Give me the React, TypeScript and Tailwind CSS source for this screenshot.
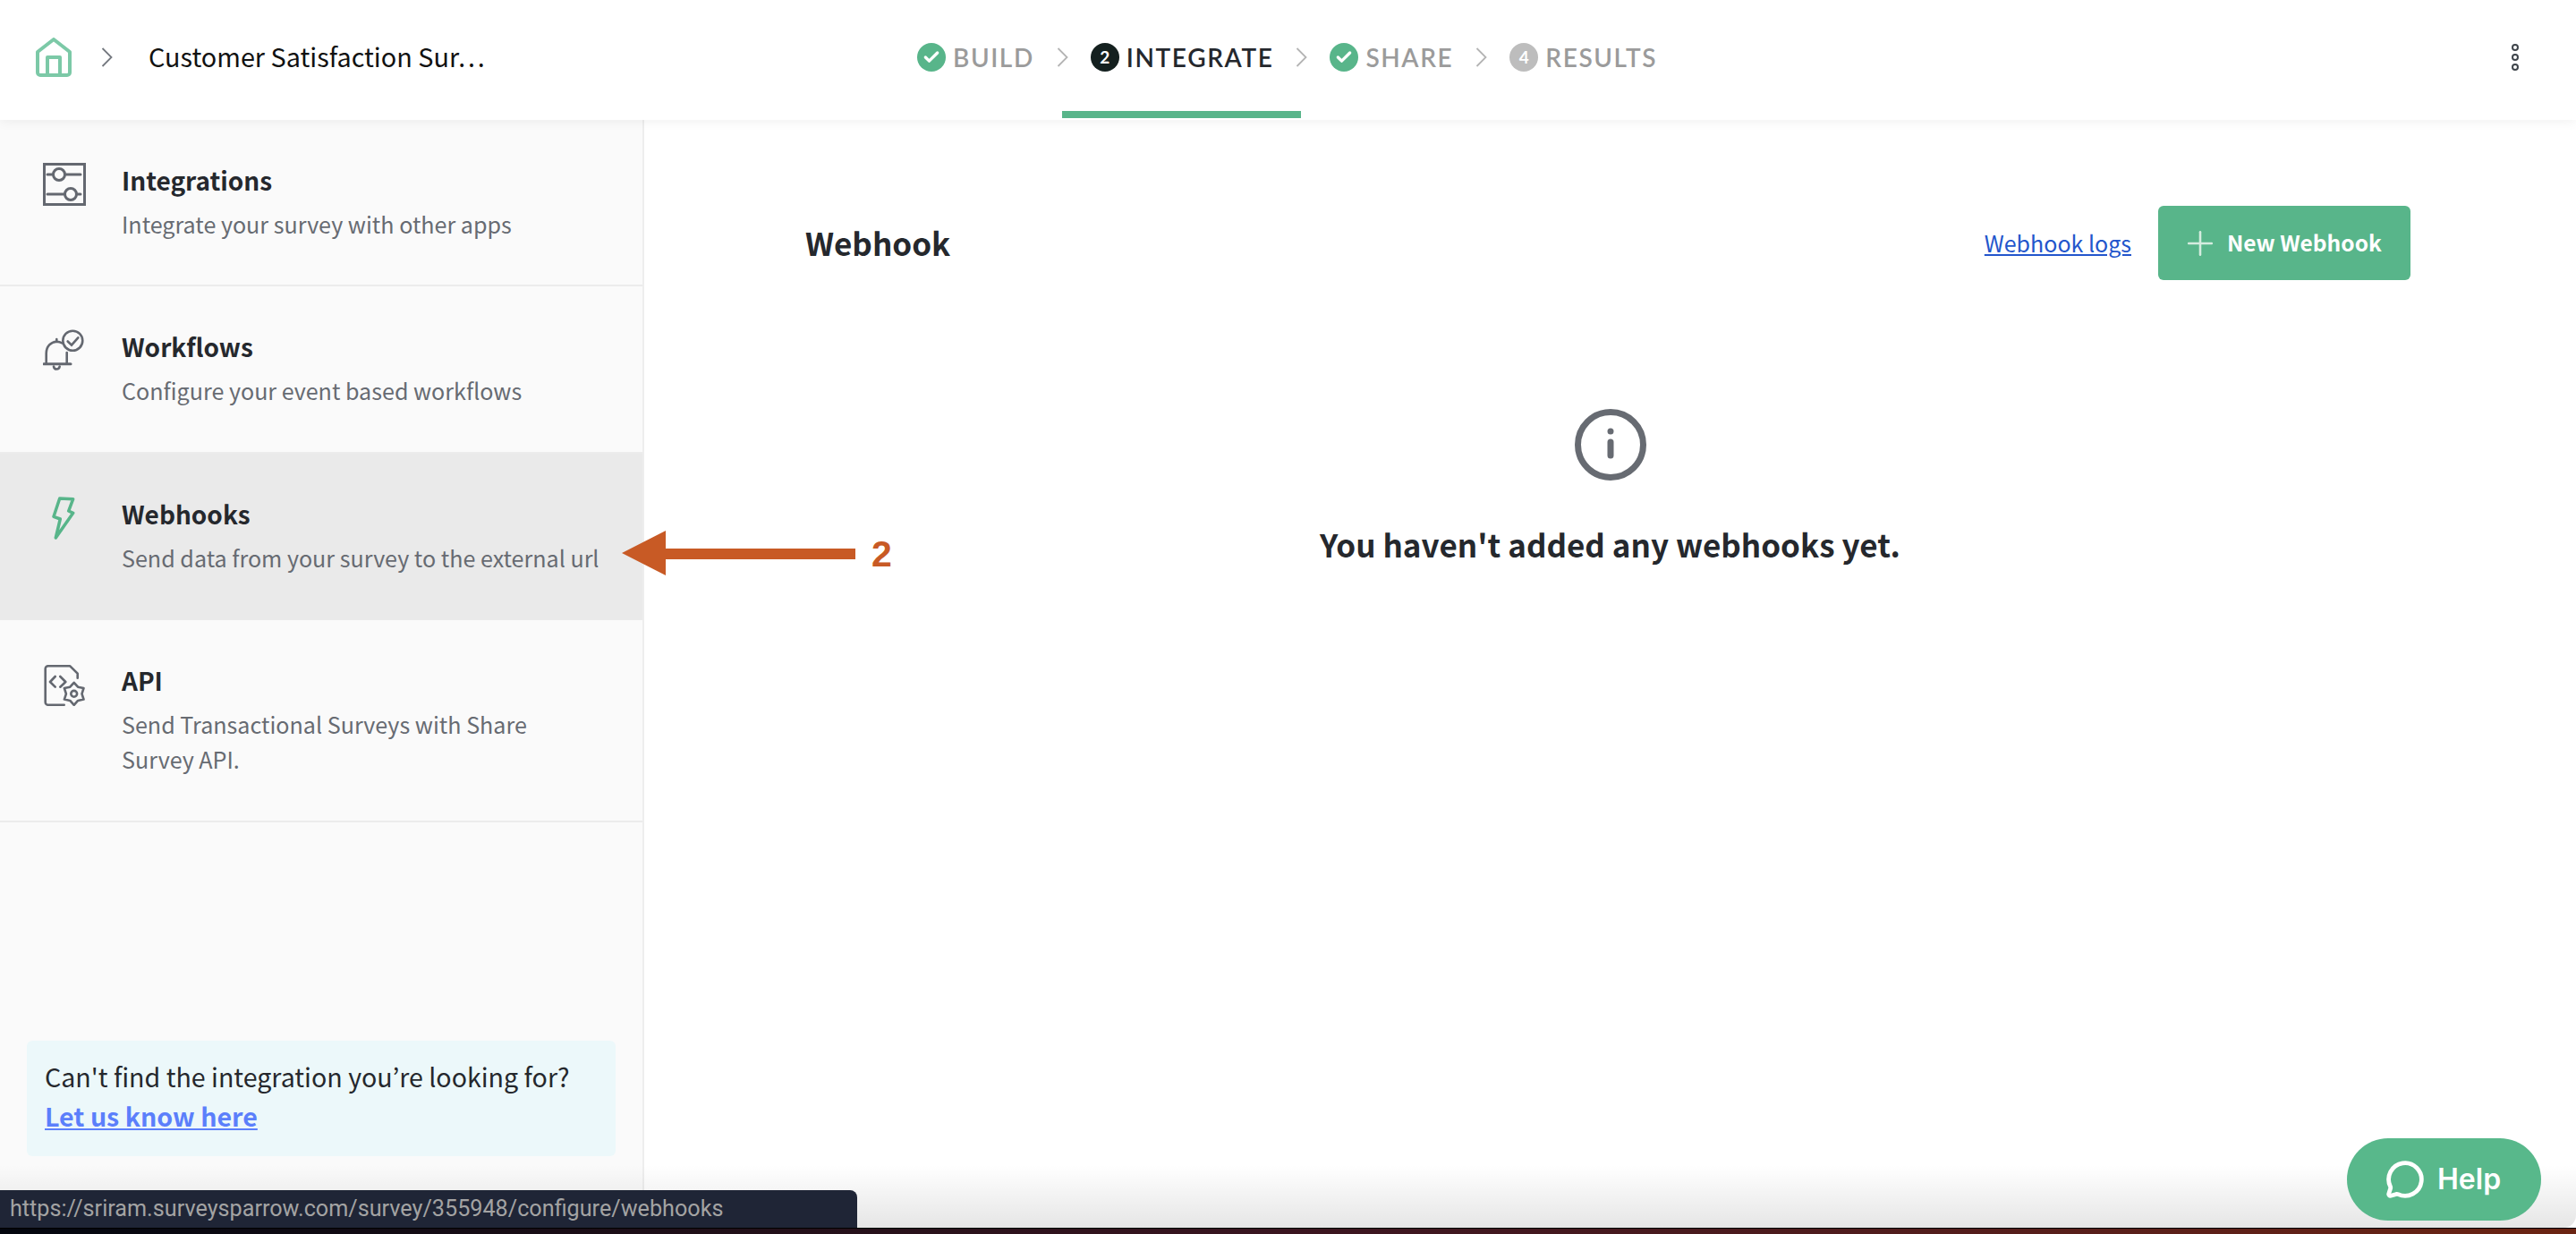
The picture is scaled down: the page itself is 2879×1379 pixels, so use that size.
import { Check, MessageCircle, Plus } from "lucide-react";

type Step = { label: string; num?: number; state: "done" | "active" | "todo" };

const STEPS: Step[] = [
  { label: "BUILD", state: "done" },
  { label: "INTEGRATE", num: 2, state: "active" },
  { label: "SHARE", state: "done" },
  { label: "RESULTS", num: 4, state: "todo" },
];

function HomeIcon() {
  return (
    <svg width="40" height="44" viewBox="0 0 40 44" fill="none" stroke="#7CC9A7" strokeWidth="4" strokeLinejoin="round">
      <path d="M2 16 L20 2 L38 16 V39 a3 3 0 0 1 -3 3 H5 a3 3 0 0 1 -3 -3 Z" />
      <path d="M13 42 V22 H27 V42" />
    </svg>
  );
}

function Chevron({ color, h = 22 }: { color: string; h?: number }) {
  return (
    <svg width="13" height={h} viewBox="0 0 13 22" fill="none" stroke={color} strokeWidth="1.8">
      <path d="M1.5 1 L11.5 11 L1.5 21" />
    </svg>
  );
}

function SlidersIcon() {
  return (
    <svg width="48" height="48" viewBox="0 0 48 48" fill="none" stroke="#646870" strokeWidth="3">
      <rect x="1.5" y="1.5" width="45" height="45" />
      <path d="M5 13 H42 M5 35 H42" strokeLinecap="round" />
      <circle cx="18" cy="13" r="6.5" fill="#fafafa" />
      <circle cx="31" cy="35" r="6.5" fill="#fafafa" />
    </svg>
  );
}

function BellIcon() {
  return (
    <svg width="48" height="48" viewBox="0 0 48 48" fill="none" stroke="#646870" strokeWidth="2.6" strokeLinecap="round">
      <circle cx="33.3" cy="12.7" r="11" />
      <path d="M27.7 13.5 L32 17.7 L39.3 9.3" />
      <path d="M1 38.7 H31" strokeWidth="3" />
      <path d="M3.7 38.7 V27 C3.7 19 9 14 15.3 13.7 C18 13.7 20 14.5 21.5 15.5 M26.7 26 V38.7" />
      <path d="M15.3 13 V11" />
      <path d="M12 41.5 C12.5 45.5 18 45.5 18.7 41.5" />
    </svg>
  );
}

function BoltIcon() {
  return (
    <svg width="48" height="48" viewBox="0 0 48 48" fill="none" stroke="#58B58A" strokeWidth="3.5" strokeLinejoin="round">
      <path d="M18.7 2 L33.7 2.7 L28.7 16 L33.7 18.3 L14.3 46 L19.3 25 L12 22.3 Z" />
    </svg>
  );
}

function ApiIcon() {
  const gear = Array.from({ length: 12 }, (_, i) => {
    const a = (i * Math.PI) / 6 - Math.PI / 2;
    const r = i % 2 === 0 ? 12.5 : 8.8;
    return `${(34.7 + r * Math.cos(a)).toFixed(1)},${(34.3 + r * Math.sin(a)).toFixed(1)}`;
  }).join(" ");
  return (
    <svg width="48" height="48" viewBox="0 0 48 48" fill="none" stroke="#646870" strokeWidth="2.6" strokeLinecap="round" strokeLinejoin="round">
      <path d="M38.7 16.7 V11.7 L30.3 3.3 H5.7 a3 3 0 0 0 -3 3 V43.7 a3 3 0 0 0 3 3 H23.7" />
      <path d="M13.7 15 L8 21 L13.7 26.7 M19.3 15 L25.3 21 L19.3 26.7" />
      <polygon points={gear} />
      <circle cx="34.7" cy="34.3" r="3.4" />
    </svg>
  );
}

const ITEMS = [
  { title: "Integrations", desc: ["Integrate your survey with other apps"], icon: <SlidersIcon /> },
  { title: "Workflows", desc: ["Configure your event based workflows"], icon: <BellIcon /> },
  { title: "Webhooks", desc: ["Send data from your survey to the external url"], icon: <BoltIcon />, active: true },
  { title: "API", desc: ["Send Transactional Surveys with Share", "Survey API."], icon: <ApiIcon /> },
];

function StepBadge({ step }: { step: Step }) {
  const bg = step.state === "done" ? "bg-[#58B58A]" : step.state === "active" ? "bg-[#14201F]" : "bg-[#BDBDBD]";
  return (
    <span className={`flex h-8 w-8 items-center justify-center rounded-full text-[19px] font-bold text-white ${bg}`}>
      {step.num ?? <Check size={20} strokeWidth={4} />}
    </span>
  );
}

export default function App() {
  return (
    <div className="flex h-screen w-full flex-col overflow-hidden bg-white font-['Noto_Sans_CJK_KR',sans-serif] text-[#25282d]">
      <div className="relative flex min-h-0 flex-1 flex-col overflow-hidden rounded-br-[14px] bg-white">
        <header className="relative z-10 flex h-[134px] shrink-0 items-center bg-white pl-10 pr-16 shadow-[0_2px_12px_rgba(0,0,0,0.06)]">
          <div className="mb-[6px] flex w-[953px] items-center">
            <HomeIcon />
            <span className="ml-[33px]">
              <Chevron color="#74787f" />
            </span>
            <span className="mb-[2px] ml-10 text-[28.8px] leading-10 text-[#111]">Customer Satisfaction Sur…</span>
          </div>
          <nav className="flex h-full items-stretch font-['Lato',sans-serif]">
            {STEPS.map((s, i) => (
              <div key={s.label} className="relative flex items-center pb-[6px] pl-8 pr-[31px]">
                <StepBadge step={s} />
                <span
                  className={`ml-2 text-[28px] font-semibold tracking-[1.6px] ${
                    s.state === "active" ? "text-[#25282d]" : "text-[#9b9b9b]"
                  }`}
                >
                  {s.label}
                </span>
                {s.state === "active" && <span className="absolute bottom-[2px] left-0 right-0 h-2 bg-[#58B58A]" />}
                {i < STEPS.length - 1 && (
                  <span className="absolute -right-[7px] top-[53px]">
                    <Chevron color="#b4b4b4" />
                  </span>
                )}
              </div>
            ))}
          </nav>
          <div className="mb-[6px] ml-auto flex flex-col gap-[3px]">
            <span className="h-2 w-2 rounded-full border-2 border-[#3f454b]" />
            <span className="h-2 w-2 rounded-full border-2 border-[#3f454b]" />
            <span className="h-2 w-2 rounded-full border-2 border-[#3f454b]" />
          </div>
        </header>

        <div className="flex min-h-0 flex-1">
          <aside className="flex w-[720px] shrink-0 flex-col border-r-2 border-[#eeeeee] bg-[#fafafa]">
            {ITEMS.map((item) => (
              <div
                key={item.title}
                className={`flex gap-10 border-b-2 pb-[48.4px] pl-12 pt-12 ${
                  item.active ? "border-[#eaeaea] bg-[#eaeaea]" : "border-[#ececec]"
                }`}
              >
                <div className="h-12 w-12 shrink-0">{item.icon}</div>
                <div>
                  <div className="text-[28px] font-semibold leading-[39px] text-[#25282d]">{item.title}</div>
                  <div className="mt-[10px] text-[25.1px] leading-[39px] text-[#676b72]">
                    {item.desc.map((line) => (
                      <div key={line}>{line}</div>
                    ))}
                  </div>
                </div>
              </div>
            ))}
            <div className="mx-[30px] mb-[80px] mt-auto h-[129px] rounded-md bg-[#ECF8FA] px-5 pt-[18px] text-[28.6px] leading-[44px] text-[#25282d]">
              <div>Can't find the integration you’re looking for?</div>
              <a className="font-bold text-[#5B7FFB] underline">Let us know here</a>
            </div>
          </aside>

          <main className="min-w-0 flex-1">
            <div className="flex items-center pl-[180px] pr-[185px] pt-24">
              <h1 className="text-[35px] font-semibold text-[#25282d]">Webhook</h1>
              <a className="ml-auto text-[25px] text-[#2356CC] underline">Webhook logs</a>
              <button className="ml-[30px] flex h-[83px] w-[282px] items-center rounded-md bg-[#58B58A] pl-[25px] text-[24.5px] font-semibold text-white">
                <Plus size={44} strokeWidth={1.4} className="text-[#d5ecdf]" />
                <span className="ml-2">New Webhook</span>
              </button>
            </div>
            <div className="mt-[144px] flex flex-col items-center">
              <svg width="80" height="80" viewBox="0 0 80 80" fill="none" stroke="#676b72">
                <circle cx="40" cy="40" r="36.5" strokeWidth="7" />
                <path d="M40 37 V52" strokeWidth="7" strokeLinecap="round" />
                <circle cx="40" cy="25" r="3.5" fill="#676b72" stroke="none" />
              </svg>
              <p className="mt-[46px] text-[35px] font-semibold leading-[50px] text-[#25282d]">
                You haven't added any webhooks yet.
              </p>
            </div>
          </main>
        </div>

        <div className="pointer-events-none absolute inset-x-0 bottom-0 h-[70px] bg-gradient-to-b from-transparent to-black/10" />

        <button className="absolute bottom-2 right-[39px] flex h-[92px] w-[217px] items-center rounded-full bg-[#58B88B] pl-[43px] font-['Inter',sans-serif] text-[32px] font-semibold text-white">
          <MessageCircle size={44} strokeWidth={2.6} />
          <span className="ml-[14px]">Help</span>
        </button>

        <div className="absolute bottom-0 left-0 flex h-[42px] w-[958px] items-center rounded-tr-lg bg-[#1F2536] pl-[11px] font-['Roboto',sans-serif] text-[25.2px] text-[#a3a3a3]">
          https://sriram.surveysparrow.com/survey/355948/configure/webhooks
        </div>
      </div>

      <div className="h-[7px] shrink-0 border-t border-black bg-gradient-to-r from-[#03060e] via-[#3a1520] to-[#6b2412]" />

      {/* annotation on top of the screenshot */}
      <div className="pointer-events-none absolute left-[690px] top-[585px] flex items-center">
        <svg width="270" height="64" viewBox="0 0 270 64" fill="#C85A25">
          <path d="M5 32 L54 7 V27 H266 V39 H54 V57 Z" />
        </svg>
        <span className="ml-[14px] mt-1 font-['Liberation_Sans',sans-serif] text-[41px] font-bold text-[#C85A25]">2</span>
      </div>
    </div>
  );
}
